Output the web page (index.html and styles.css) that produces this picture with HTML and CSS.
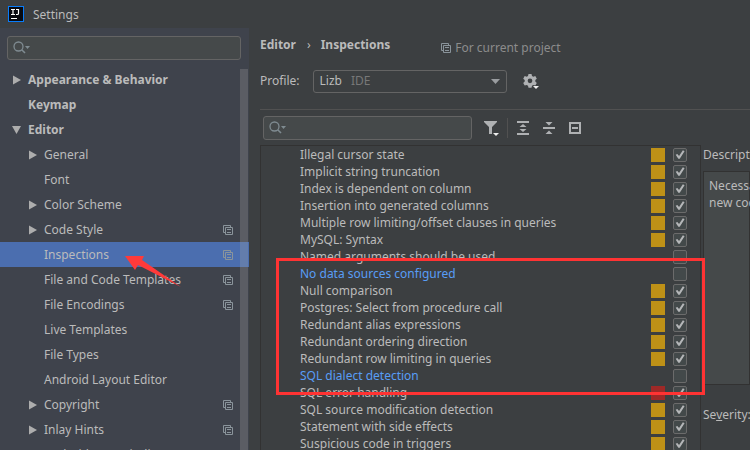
FILE: index.html
```html
<!DOCTYPE html>
<html lang="en">
<head>
<meta charset="utf-8">
<title>Settings</title>
<link rel="stylesheet" href="styles.css">
</head>
<body>
<svg class="defs" aria-hidden="true">
  <symbol id="copy" viewBox="0 0 10 10"><path d="M2.5 2.5h7v7h-7zM2 7.500H.5v-7h7V2M4 4.500h4M4 7.500h4" fill="none" stroke="currentColor"/></symbol>
  <symbol id="right" viewBox="0 0 9 10"><path d="M1 .5 9 5 1 9.500z" fill="currentColor"/></symbol>
  <symbol id="down" viewBox="0 0 9 10"><path d="M0 1h9L4.500 9z" fill="currentColor"/></symbol>
  <symbol id="search" viewBox="0 0 17 14"><circle cx="5.500" cy="5.500" r="4.500" fill="none" stroke="currentColor" stroke-width="1.300"/><path d="M8.700 8.700l3.300 3.300" stroke="currentColor" stroke-width="1.600"/><path d="M12 5h5l-2.500 3z" fill="currentColor"/></symbol>
</svg>
<header class="titlebar">
  <svg class="logo" viewBox="0 0 16 16" aria-hidden="true"><path d="M0 0h16v16H0z" fill="#087cfa"/><path d="M1 1h14v14H1z" fill="#080a10"/><path d="M3 3.500h4M5 3v6M3 8.500h4M8 3.500h3M10.500 3v4.500q0 1-1 1H8" fill="none" stroke="#fff" stroke-width="1.200"/><path d="M3 12h6v1H3z" fill="#fff"/></svg>
  <h1 class="title">Settings</h1>
</header>
<div class="body">
  <nav class="sidebar" aria-label="Settings">
    <label class="search side-search"><svg class="search-icon" aria-hidden="true"><use href="#search"/></svg><input type="text" aria-label="Search settings"></label>
    <ul class="tree">
      <li class="top"><svg class="tri"><use href="#right"/></svg><a href="#">Appearance &amp; Behavior</a></li>
      <li class="top"><span class="tri"></span><a href="#">Keymap</a></li>
      <li class="top"><svg class="tri"><use href="#down"/></svg><a href="#">Editor</a></li>
      <li><svg class="tri"><use href="#right"/></svg><a href="#">General</a></li>
      <li><span class="tri"></span><a href="#">Font</a></li>
      <li><svg class="tri"><use href="#right"/></svg><a href="#">Color Scheme</a></li>
      <li><svg class="tri"><use href="#right"/></svg><a href="#">Code Style</a><svg class="copy"><use href="#copy"/></svg></li>
      <li class="selected"><span class="tri"></span><a href="#">Inspections</a><svg class="copy"><use href="#copy"/></svg></li>
      <li><span class="tri"></span><a href="#">File and Code Templates</a><svg class="copy"><use href="#copy"/></svg></li>
      <li><span class="tri"></span><a href="#">File Encodings</a><svg class="copy"><use href="#copy"/></svg></li>
      <li><span class="tri"></span><a href="#">Live Templates</a></li>
      <li><span class="tri"></span><a href="#">File Types</a></li>
      <li><span class="tri"></span><a href="#">Android Layout Editor</a></li>
      <li><svg class="tri"><use href="#right"/></svg><a href="#">Copyright</a><svg class="copy"><use href="#copy"/></svg></li>
      <li><svg class="tri"><use href="#right"/></svg><a href="#">Inlay Hints</a><svg class="copy"><use href="#copy"/></svg></li>
      <li><span class="tri"></span><a href="#">Android Data Binding</a></li>
    </ul>
    <div class="scrollbar"></div>
    <svg class="arrow" viewBox="0 0 56 33" aria-hidden="true"><path d="M0 1 19 1 17 5 56 32 13 10 10 15z" fill="#ff3a3a"/></svg>
  </nav>
  <main class="content">
    <div class="crumbs"><h2>Editor</h2><span class="sep">›</span><h2>Inspections</h2><span class="scope"><svg class="copy"><use href="#copy"/></svg>For current project</span></div>
    <div class="profile">
      <span>Profile:</span>
      <button class="combo" type="button" aria-label="Profile"><span>Lizb</span><span class="dim">IDE</span><svg class="caret" viewBox="0 0 9 5"><path d="M0 0h9L4.500 5z" fill="currentColor"/></svg></button>
      <button class="icon gear" type="button" aria-label="Profile actions"><svg viewBox="0 0 16 17"><path d="M5.500 1h3l.5 2 1.300.7 2-.6 1.500 2.600-1.500 1.400v1.500l1.500 1.400-1.500 2.600-2-.6L9 12.700l-.5 2h-3l-.5-2-1.300-.7-2 .6L.200 10l1.500-1.400V7.100L.2 5.700l1.500-2.600 2 .6L5 3zM7 5.500a2.300 2.300 0 1 0 0 4.700 2.300 2.300 0 0 0 0-4.700z" fill="currentColor" fill-rule="evenodd"/><path d="M10 13h6l-3 3z" fill="#eee"/></svg></button>
    </div>
    <div class="tools">
      <label class="search list-search"><svg class="search-icon" aria-hidden="true"><use href="#search"/></svg><input type="text" aria-label="Search inspections"></label>
      <button class="icon filter" type="button" aria-label="Filter"><svg viewBox="0 0 16 17"><path d="M0 2h13v1L8 8v7H5V8L0 3z" fill="currentColor"/><path d="M9 14h6l-3 3z" fill="#eee"/></svg></button>
      <span class="divider"></span>
      <button class="icon" type="button" aria-label="Expand all"><svg viewBox="0 0 12 14"><path d="M0 0h12v2H0zM0 12h12v2H0zM6 3l3.500 3h-7zM6 11 2.500 8h7z" fill="currentColor"/></svg></button>
      <button class="icon" type="button" aria-label="Collapse all"><svg viewBox="0 0 12 14"><path d="M0 6h12v2H0zM2.500 1h7L6 4.500zM2.500 13h7L6 9.500z" fill="currentColor"/></svg></button>
      <button class="icon" type="button" aria-label="Reset"><svg viewBox="0 0 12 14"><path d="M1 2h10v10H1z" fill="none" stroke="currentColor" stroke-width="2"/><path d="M3 6h6v2H3z" fill="currentColor"/></svg></button>
    </div>
    <div class="panes">
      <div class="list-pane">
        <ul class="list">
          <li><label for="i1">Illegal cursor state</label><i class="sev"></i><input id="i1" type="checkbox" checked></li>
          <li><label for="i2">Implicit string truncation</label><i class="sev"></i><input id="i2" type="checkbox" checked></li>
          <li><label for="i3">Index is dependent on column</label><i class="sev"></i><input id="i3" type="checkbox" checked></li>
          <li><label for="i4">Insertion into generated columns</label><i class="sev"></i><input id="i4" type="checkbox" checked></li>
          <li><label for="i5">Multiple row limiting/offset clauses in queries</label><i class="sev"></i><input id="i5" type="checkbox" checked></li>
          <li><label for="i6">MySQL: Syntax</label><i class="sev"></i><input id="i6" type="checkbox" checked></li>
          <li><label for="i7">Named arguments should be used</label><input id="i7" type="checkbox"></li>
          <li class="changed"><label for="i8">No data sources configured</label><input id="i8" type="checkbox"></li>
          <li><label for="i9">Null comparison</label><i class="sev"></i><input id="i9" type="checkbox" checked></li>
          <li><label for="i10">Postgres: Select from procedure call</label><i class="sev"></i><input id="i10" type="checkbox" checked></li>
          <li><label for="i11">Redundant alias expressions</label><i class="sev"></i><input id="i11" type="checkbox" checked></li>
          <li><label for="i12">Redundant ordering direction</label><i class="sev"></i><input id="i12" type="checkbox" checked></li>
          <li><label for="i13">Redundant row limiting in queries</label><i class="sev"></i><input id="i13" type="checkbox" checked></li>
          <li class="changed"><label for="i14">SQL dialect detection</label><input id="i14" type="checkbox"></li>
          <li><label for="i15">SQL error handling</label><i class="sev error"></i><input id="i15" type="checkbox" checked></li>
          <li><label for="i16">SQL source modification detection</label><i class="sev"></i><input id="i16" type="checkbox" checked></li>
          <li><label for="i17">Statement with side effects</label><i class="sev"></i><input id="i17" type="checkbox" checked></li>
          <li><label for="i18">Suspicious code in triggers</label><i class="sev"></i><input id="i18" type="checkbox" checked></li>
        </ul>
        <div class="highlight"></div>
      </div>
      <section class="detail">
        <h3>Description</h3>
        <div class="desc">Necessary<br>new code</div>
        <p class="severity">Se<u>v</u>erity:</p>
      </section>
    </div>
  </main>
</div>
</body>
</html>
```
FILE: styles.css
```css
* { box-sizing: border-box; }
body {
  margin: 0;
  height: 100vh;
  overflow: hidden;
  display: flex;
  flex-direction: column;
  background: #3c3f41;
  color: #bbbbbb;
  font: 12px/16px "Noto Sans", "Open Sans", sans-serif;
}
h1, h2, h3, p, ul { margin: 0; padding: 0; font-size: inherit; font-weight: 400; list-style: none; }
a { color: inherit; text-decoration: none; }
button { padding: 0; border: 0; background: none; color: inherit; font: inherit; }
.defs { position: absolute; width: 0; height: 0; }

.titlebar { flex: none; height: 28px; display: flex; align-items: center; gap: 9px; padding-left: 8px; }
.title { padding-top: 2px; }
.logo { width: 16px; height: 16px; }

.body { flex: 1; min-height: 0; display: flex; }
.sidebar { position: relative; flex: 0 0 249px; background: #3f434c; overflow: hidden; }
.search {
  display: flex;
  align-items: center;
  height: 24px;
  padding: 0 5px;
  border: 1px solid #646464;
  border-radius: 3px;
  background: #45494a;
  color: #7f8b91;
}
.search-icon { flex: none; width: 17px; height: 14px; }
.search input { flex: 1; min-width: 0; border: 0; outline: 0; background: none; color: #bbbbbb; font: inherit; }
.side-search { margin: 8px 8px 7px 7px; }

.tree li { display: flex; align-items: center; height: 25px; padding: 0 16px 0 28px; }
.tree .top { padding-left: 12px; font-weight: 700; }
.tri { flex: none; width: 9px; height: 10px; margin-right: 7px; color: #adadad; }
.tree a { flex: 1; white-space: nowrap; }
.copy { flex: none; width: 10px; height: 10px; color: #8a949b; }
.tree .selected { background: #4b6eaf; }
.scrollbar { position: absolute; top: 41px; right: 1px; bottom: 0; width: 8px; background: rgba(166, 166, 166, .27); }
.arrow { position: absolute; left: 125px; top: 227px; width: 56px; height: 33px; }

.content { flex: 1; min-width: 0; display: flex; flex-direction: column; padding-left: 11px; }
.crumbs { display: flex; align-items: center; height: 34px; }
.crumbs h2 { font-weight: 700; }
.sep { margin: 0 10px 0 11px; }
.scope { display: flex; align-items: center; gap: 4px; margin: 6px 0 0 51px; color: #8c8c8c; }
.profile { display: flex; align-items: center; height: 38px; }
.combo {
  display: flex;
  align-items: center;
  gap: 9px;
  width: 194px;
  height: 23px;
  margin: 0 16px 0 13px;
  padding: 0 6px;
  border: 1px solid #646464;
  border-radius: 3px;
}
.dim { color: #787878; }
.caret { width: 9px; height: 5px; margin-left: auto; color: #9a9da0; }
.icon { flex: none; width: 12px; height: 14px; color: #afb1b3; }
.icon svg { display: block; width: 100%; height: 100%; }
.icon.gear, .icon.filter { width: 16px; height: 17px; }
.tools { display: flex; align-items: center; gap: 14px; height: 36px; margin-top: 9px; padding-left: 3px; border-top: 1px solid #515151; }
.list-search { width: 209px; margin-right: -2px; }
.divider { width: 1px; height: 20px; margin: 0 -5px 0 -7px; background: #515151; }

.panes { flex: 1; min-height: 0; display: flex; }
.list-pane { position: relative; flex: 0 0 441px; border: 1px solid #323232; border-width: 1px 1px 0; }
.list { height: 100%; overflow: hidden; }
.list li { display: flex; align-items: center; height: 17px; padding: 0 13px 0 39px; }
.list label { flex: 1; white-space: nowrap; }
.changed { color: #589df6; }
.sev { width: 14px; height: 14px; margin-right: 8px; background: #be9117; }
.sev.error { background: #9e2927; }
.list input { appearance: none; width: 14px; height: 14px; margin: 0; border: 1px solid #6b6b6b; border-radius: 2px; background: #43494a; }
.list input:checked::before {
  content: "";
  display: block;
  width: 12px;
  height: 12px;
  background: #b4b6b8;
  clip-path: polygon(14% 52%, 28% 46%, 42% 62%, 74% 14%, 88% 22%, 48% 86%, 36% 86%);
}
.highlight { position: absolute; left: 15px; right: -5px; top: 112px; height: 137px; border: 3px solid #ff3333; pointer-events: none; }

.detail { flex: 1; min-width: 0; overflow: hidden; padding-left: 2px; white-space: nowrap; }
.detail h3 { height: 26px; padding-top: 2px; }
.desc { height: 214px; padding: 5px; border: 1px solid #323232; background: #45494a; line-height: 17px; }
.severity { margin-top: 22px; }
```
